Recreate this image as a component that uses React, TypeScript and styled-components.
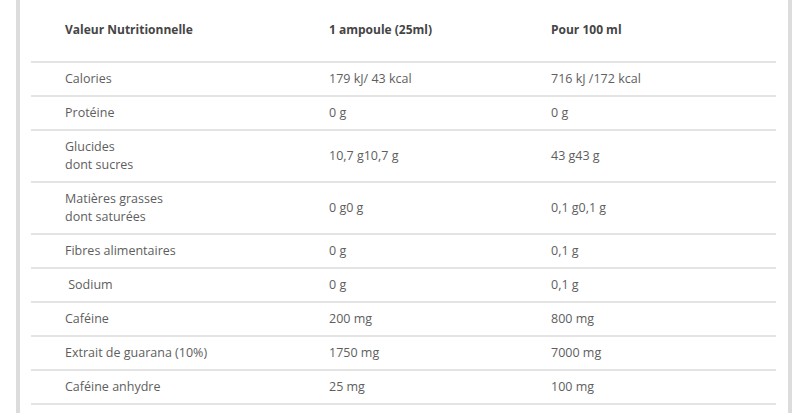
import React from 'react'
import styled, { createGlobalStyle } from 'styled-components'

const GlobalStyle = createGlobalStyle`
  html, body {
    margin: 0;
    padding: 0;
    background: #ffffff;
  }
  body {
    font-family: 'Open Sans', 'Liberation Sans', Arial, sans-serif;
  }
`

type Row = { label: string[]; dose: string; per100: string }

const rows: Row[] = [
  { label: ['Calories'], dose: '179 kJ/ 43 kcal', per100: '716 kJ /172 kcal' },
  { label: ['Protéine'], dose: '0 g', per100: '0 g' },
  { label: ['Glucides', 'dont sucres'], dose: '10,7 g10,7 g', per100: '43 g43 g' },
  { label: ['Matières grasses', 'dont saturées'], dose: '0 g0 g', per100: '0,1 g0,1 g' },
  { label: ['Fibres alimentaires'], dose: '0 g', per100: '0,1 g' },
  { label: ['\u00a0Sodium'], dose: '0 g', per100: '0,1 g' },
  { label: ['Caféine'], dose: '200 mg', per100: '800 mg' },
  { label: ['Extrait de guarana (10%)'], dose: '1750 mg', per100: '7000 mg' },
  { label: ['Caféine anhydre'], dose: '25 mg', per100: '100 mg' },
]

const Page = styled.div`
  width: 800px;
  height: 413px;
  overflow: hidden;
  padding: 0 8px 0 16px;
  box-sizing: border-box;
`

const Panel = styled.div`
  height: 100%;
  border-left: 4px solid #dcdcdc;
  border-right: 4px solid #dcdcdc;
  padding: 0 12px 0 11px;
  box-sizing: border-box;
`

const Table = styled.div`
  display: grid;
  grid-template-columns: 264px 222px 1fr;
`

const Line = styled.div<{ $tall?: boolean; $head?: boolean }>`
  display: contents;
  & > div {
    height: ${p => (p.$head ? 63 : p.$tall ? 52 : 34)}px;
    border-bottom: 2px solid #e4e4e4;
  }
`

const Cell = styled.div<{ $head?: boolean }>`
  box-sizing: border-box;
  display: flex;
  flex-direction: column;
  justify-content: center;
  padding-left: 34px;
  padding-bottom: ${p => (p.$head ? 2 : 0)}px;
  font-size: ${p => (p.$head ? 12 : 12.5)}px;
  line-height: 18px;
  color: ${p => (p.$head ? '#454545' : '#5e5e5e')};
  font-weight: ${p => (p.$head ? 700 : 400)};
  white-space: nowrap;
`

export default function App() {
  return (
    <>
      <GlobalStyle />
      <Page>
        <Panel>
          <Table>
            <Line $head>
              <Cell $head>Valeur Nutritionnelle</Cell>
              <Cell $head>1 ampoule (25ml)</Cell>
              <Cell $head>Pour 100 ml</Cell>
            </Line>
            {rows.map(r => (
              <Line key={r.label.join()} $tall={r.label.length > 1}>
                <Cell>
                  {r.label.map(l => (
                    <span key={l}>{l}</span>
                  ))}
                </Cell>
                <Cell>{r.dose}</Cell>
                <Cell>{r.per100}</Cell>
              </Line>
            ))}
          </Table>
        </Panel>
      </Page>
    </>
  )
}
